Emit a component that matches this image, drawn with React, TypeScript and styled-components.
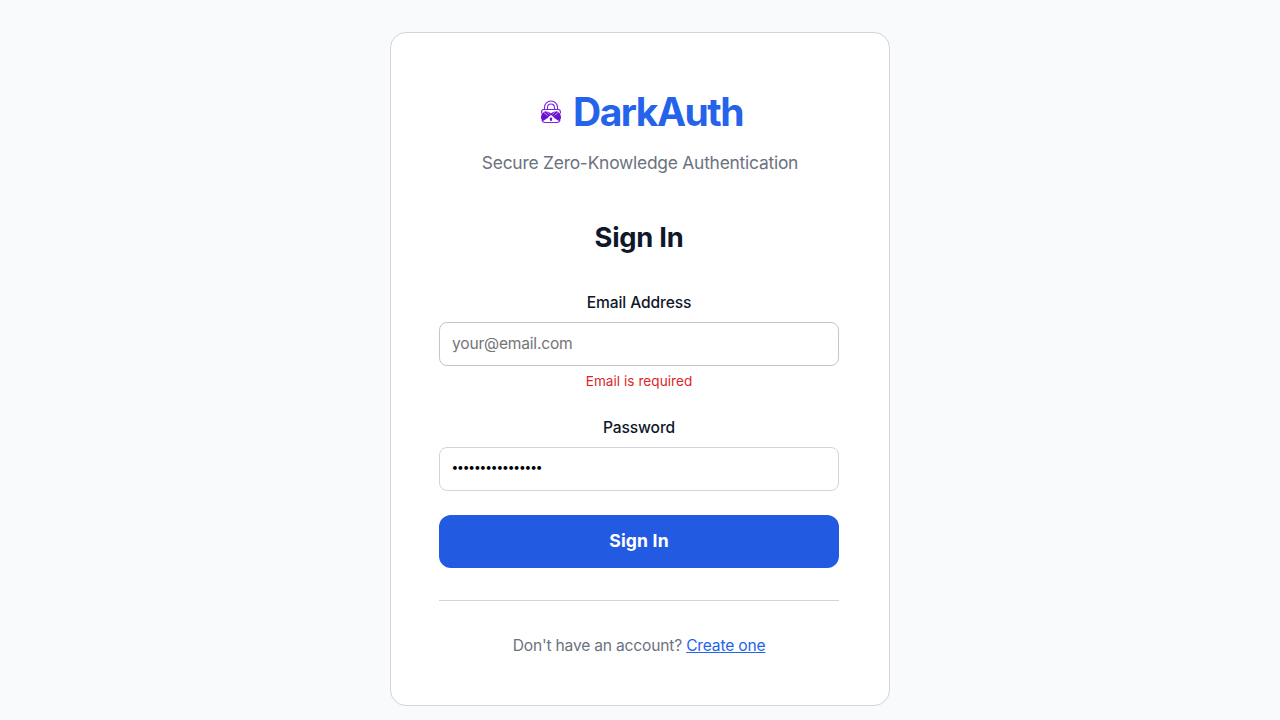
import React from "react";
import styled, { createGlobalStyle } from "styled-components";

const GlobalStyle = createGlobalStyle`
  *, *::before, *::after { box-sizing: border-box; }
  body {
    margin: 0;
    height: 720px;
    overflow: hidden;
    background: #f8fafc;
    font-family: Inter, "Liberation Sans", sans-serif;
    color: #0f172a;
    -webkit-font-smoothing: antialiased;
  }
`;

const Page = styled.main`
  display: flex;
  justify-content: center;
  align-items: flex-start;
  padding: 32px 0 14px;
`;

const Card = styled.section`
  width: 500px;
  height: 674px;
  padding: 48px;
  background: #fff;
  border: 1px solid #d1d5db;
  border-radius: 16px;
`;

const Header = styled.header`
  display: flex;
  flex-direction: column;
  align-items: center;
  height: 140px;
`;

const Brand = styled.h1`
  display: flex;
  align-items: center;
  gap: 10px;
  margin: 0;
  height: 62px;
  padding: 0 0 0 2px;
  color: #2563eb;
  font-size: 39px;
  font-weight: 700;
  letter-spacing: -1.5px;
  line-height: 62px;
`;

const Tagline = styled.p`
  margin: 6px 0 0;
  color: #6b7280;
  font-size: 17.4px;
  letter-spacing: -0.23px;
  line-height: 28px;
`;

const Form = styled.form`
  display: flex;
  flex-direction: column;
  width: 400px;
`;

const Title = styled.h2`
  margin: 0 0 37px;
  padding-top: 1px;
  text-align: center;
  font-size: 27.3px;
  font-weight: 700;
  line-height: 32px;
  letter-spacing: -0.25px;
`;

const Field = styled.div`
  display: flex;
  flex-direction: column;
  margin-bottom: 24px;

  & + & {
    margin-top: 1px;
  }
`;

const Label = styled.label`
  margin-bottom: 7px;
  text-align: center;
  font-size: 15.6px;
  font-weight: 500;
  letter-spacing: -0.12px;
  line-height: 24px;
`;

const Input = styled.input<{ $invalid?: boolean }>`
  height: 44px;
  padding: 0 12px 2px;
  border: 1px solid ${(p) => (p.$invalid ? "#d1bfc7" : "#d1d5db")};
  border-radius: 8px;
  background: #fff;
  color: #000;
  font: 400 15.6px/20px Inter, sans-serif;
  letter-spacing: -0.21px;
  outline: none;
  &::placeholder { color: #757575; opacity: 1; }
  &[type="password"] {
    padding: 0 11.5px 5px;
    font-size: 12px;
    letter-spacing: -1.13px;
  }
`;

const ErrorText = styled.p`
  margin: 5px 0 -1px;
  text-align: center;
  color: #dc2626;
  font-size: 13.6px;
  letter-spacing: 0.03px;
  line-height: 21px;
`;

const Submit = styled.button`
  height: 53px;
  padding: 0 0 2px;
  border: 0;
  border-radius: 12px;
  background: #235ae2;
  color: #fff;
  font: 700 17.6px/24px Inter, sans-serif;
  letter-spacing: 0.15px;
`;

const Footer = styled.footer`
  width: 400px;
  margin-top: 32px;
  padding-top: 33px;
  border-top: 1px solid #d1d5db;
  text-align: center;
  color: #6b7280;
  font-size: 15.6px;
  letter-spacing: -0.19px;
  line-height: 24px;
`;

const SignUp = styled.a`
  color: #2563eb;
  text-decoration: underline;
`;

const LockMark = () => (
  <svg width="24" height="24" viewBox="0 0 24 24" fill="none">
    <g stroke="#7c22dc" strokeWidth="1.1">
      <path d="M5.5 9.5v-2a6.500 6.500 0 0 1 13 0v2" />
      <path d="M8.500 9.500v-2a3.500 3.500 0 0 1 7 0v2" />
      <path d="M2.600 13.500v-1.500c0-1.400.9-2.500 2.300-2.500h14.200c1.400 0 2.300 1.100 2.300 2.500v1.500" />
      <path d="M3 20c.3 1.800 1.500 2.500 3.200 2.500h11.600c1.700 0 2.900-.7 3.200-2.500" />
    </g>
    <path d="M2 17.500c0-3 1.500-5.400 4.200-6.300 2.200 0 4.100.7 5.800 2.100 1.700-1.400 3.600-2.100 5.800-2.100 2.700.9 4.200 3.300 4.200 6.300 0 1.500-.8 2.700-2 3.400-2.200-.8-4.200-2.300-6-4.300l-2-1.500-2 1.500c-1.800 2-3.800 3.500-6 4.300-1.200-.7-2-1.900-2-3.400Z" fill="#6b0fd0" />
    <path d="m4.500 12.200 4 3.300M7 10.500l3.700 4M9.500 10l2.500 3 2.500-3M17 10.500l-3.700 4M19.500 12.200l-4 3.300" stroke="#fff" strokeWidth=".6" />
    <path d="M10.700 18.700a1.300 1.300 0 1 1 2.600 0l-.7 2.300h-1.200Z" fill="#6b0fd0" />
  </svg>
);

export default function App() {
  return (
    <>
      <GlobalStyle />
      <Page>
        <Card>
          <Header>
            <Brand><LockMark />DarkAuth</Brand>
            <Tagline>Secure Zero-Knowledge Authentication</Tagline>
          </Header>
          <Form onSubmit={(e) => e.preventDefault()} noValidate>
            <Title>Sign In</Title>
            <Field>
              <Label htmlFor="email">Email Address</Label>
              <Input id="email" type="email" placeholder="your@email.com" $invalid />
              <ErrorText>Email is required</ErrorText>
            </Field>
            <Field>
              <Label htmlFor="password">Password</Label>
              <Input id="password" type="password" defaultValue="samplepassword12" />
            </Field>
            <Submit type="submit">Sign In</Submit>
          </Form>
          <Footer>
            Don't have an account? <SignUp href="#">Create one</SignUp>
          </Footer>
        </Card>
      </Page>
    </>
  );
}
